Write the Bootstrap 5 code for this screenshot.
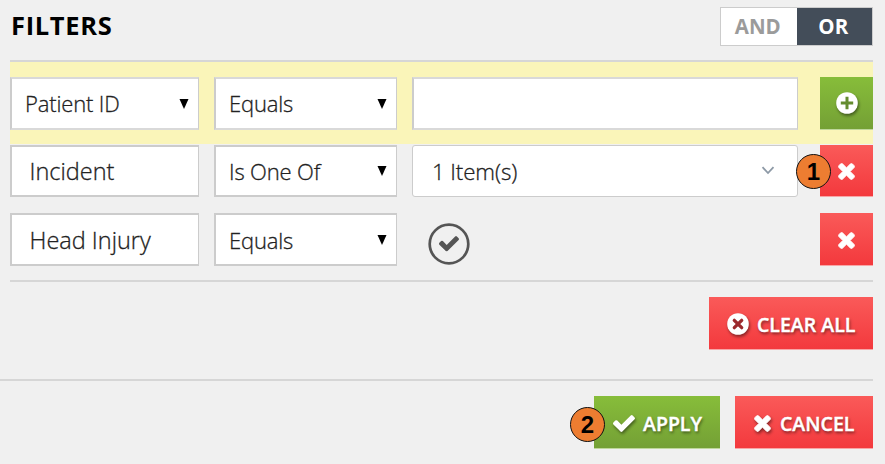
<!DOCTYPE html>
<html lang="en">
<head>
<meta charset="utf-8">
<meta name="viewport" content="width=device-width, initial-scale=1">
<title>Filters</title>
<link href="https://cdn.jsdelivr.net/npm/bootstrap@5.3.0/dist/css/bootstrap.min.css" rel="stylesheet">
<style>
body{background:#f0f0f0;color:#222;font-family:"Open Sans","Noto Sans",sans-serif;height:464px;overflow:hidden}
.panel{width:873px}
.filters{padding-left:10px}
.top{height:60px;padding-top:7px}
.title{font-size:25.5px;line-height:37px;font-weight:700;color:#000;margin:0 0 0 1px;letter-spacing:.65px}
.toggle{width:153px;height:39px;border:1.5px solid #ccc;background:#fff}
.toggle .opt{color:#9b9b9b;border:0;padding:0 2px 1px 0;font-size:20.5px;font-weight:700;background:#fff}
.toggle .opt.on{background:#434d59;color:#fff}
.rule{height:2px;background:#d6d6d6}
.filter{display:grid;grid-template-columns:189px 183px 386px 53px;column-gap:15px;height:69px;align-items:start}
.filter>:last-child{margin-left:7px}
.filter.hot{background:#faf5b9;height:82px;padding-top:15px}
.filter.mid{padding-top:1px}
.filter.mid .field,.filter.mid .act{height:52px}
.filter.last{height:67px}
.field{height:53px;background:#fff;border:2px solid #ccc;border-right-width:1.5px;font-size:22px;font-weight:300;padding:0 9px 0 13px;white-space:nowrap;-webkit-text-stroke:.3px #222}
.hot .field{border-top-color:#d9d9d9;border-bottom-color:#d9d9d9}
.field.wide{padding-left:17.5px;font-size:23.5px}
.field.multi{border-radius:3px;border-width:1.5px;border-color:#ccc;padding:0 22px 0 19px;font-size:22.3px;letter-spacing:-.1px}
.last .field span,.mid .wide span,.multi span{padding-top:2px}
.mid .act,.last .act{padding-top:2px}
.multi svg{margin-bottom:2px}
.fit{letter-spacing:-.15px}
.act{height:53px;border-radius:0;border:0;color:#fff!important;font-size:19.5px;font-weight:600;padding:0;white-space:nowrap}
.act.square{width:53px}
.red{background:linear-gradient(#fa5a59,#f3393d);border-bottom:1px solid #f8a5a6}
.green{background:linear-gradient(#87bd3a,#74a035);border-bottom:1px solid #bfd79b}
.shade{text-shadow:1px 2px 3px rgba(0,0,0,.5)}
.label{padding-top:3px;-webkit-text-stroke:.4px #fff}
.shade svg,.green svg{filter:drop-shadow(1px 2px 1.5px rgba(0,0,0,.45))}
.shade svg{position:relative;top:1px}
.step{position:absolute;width:35px;height:35px;border-radius:50%;background:#ed7d31;border:1.3px solid #111;color:#000;font:700 24px/33px "Liberation Sans",Arial,sans-serif;text-align:center;text-shadow:none}
.step.one{left:-24px;top:9px}
.step.two{left:-24px;top:11px}
.okay{padding:10px 0 0 16px}
.clearrow{height:97px;padding-top:15px}
.clear{width:164px;padding-left:18px;gap:8px}
.foot{gap:15px;padding-top:15px}
.apply{width:126px;padding-left:19px;gap:8px}
.cancel{width:138px;padding-left:19px;gap:9px}
svg{display:block;flex:none}
</style>
</head>
<body>
<svg width="0" height="0" class="position-absolute">
<symbol id="x" viewBox="270 336 1252 1248"><path fill="currentColor" stroke="currentColor" stroke-width="60" d="M1490 1322q0 40-28 68l-136 136q-28 28-68 28t-68-28l-294-294-294 294q-28 28-68 28t-68-28l-136-136q-28-28-28-68t28-68l294-294-294-294q-28-28-28-68t28-68l136-136q28-28 68-28t68 28l294 294 294-294q28-28 68-28t68 28l136 136q28 28 28 68t-28 68l-294 294 294 294q28 28 28 68z"/></symbol>
<symbol id="check" viewBox="121 334 1550 1188"><path fill="currentColor" d="M1671 566q0 40-28 68l-724 724-136 136q-28 28-68 28t-68-28l-136-136-362-362q-28-28-28-68t28-68l136-136q28-28 68-28t68 28l294 295 656-657q28-28 68-28t68 28l136 136q28 28 28 68z"/></symbol>
</svg>
<main class="panel">
<section class="filters">
<header class="top d-flex justify-content-between"><h1 class="title">FILTERS</h1>
<div class="toggle d-flex" role="group"><button class="opt w-50">AND</button><button class="opt on w-50">OR</button></div></header>
<div class="rule"></div>
<div class="filter hot">
<div class="field d-flex align-items-center justify-content-between"><span class="fit">Patient ID</span><svg width="10" height="10"><path d="M.5 0h9L5 10z"/></svg></div>
<div class="field d-flex align-items-center justify-content-between"><span class="fit">Equals</span><svg width="10" height="10"><path d="M.5 0h9L5 10z"/></svg></div>
<div class="field"></div>
<button class="btn act square green d-flex align-items-center justify-content-center" aria-label="Add"><svg width="22" height="22"><circle cx="11" cy="11" r="10.8" fill="#fff"/><path d="M11 4.800v12.400M4.800 11h12.400" stroke="#648c2f" stroke-width="3"/></svg></button>
</div>
<div class="filter mid">
<div class="field wide d-flex align-items-center"><span>Incident</span></div>
<div class="field d-flex align-items-center justify-content-between"><span class="fit">Is One Of</span><svg width="10" height="10"><path d="M.5 0h9L5 10z"/></svg></div>
<div class="field multi d-flex align-items-center justify-content-between"><span>1 Item(s)</span><svg width="14" height="9"><path d="M1.500 1.200 7 7l5.500-5.800" fill="none" stroke="#8d99a6" stroke-width="1.800"/></svg></div>
<button class="btn act square red position-relative d-flex align-items-center justify-content-center" aria-label="Remove"><svg width="17" height="17"><use href="#x"/></svg><span class="step one">1</span></button>
</div>
<div class="filter last">
<div class="field wide d-flex align-items-center"><span>Head Injury</span></div>
<div class="field d-flex align-items-center justify-content-between"><span class="fit">Equals</span><svg width="10" height="10"><path d="M.5 0h9L5 10z"/></svg></div>
<div class="okay"><svg width="42" height="42"><circle cx="21" cy="21" r="19.300" fill="none" stroke="#555" stroke-width="2.700"/><use href="#check" x="11" y="13" width="20" height="15.500" color="#555"/></svg></div>
<button class="btn act square red d-flex align-items-center justify-content-center" aria-label="Remove"><svg width="17" height="17"><use href="#x"/></svg></button>
</div>
<div class="rule"></div>
<div class="d-flex justify-content-end clearrow"><button class="btn act clear red shade d-flex align-items-center"><svg width="22" height="22"><circle cx="11" cy="11" r="10.800" fill="#fff"/><path d="m7.300 7.300 7.400 7.400m0-7.400-7.400 7.400" stroke="#9b292c" stroke-width="3.300" stroke-linecap="round"/></svg><span class="label">CLEAR ALL</span></button></div>
</section>
<div class="rule"></div>
<footer class="d-flex justify-content-end foot">
<button class="btn act apply green shade position-relative d-flex align-items-center"><span class="step two">2</span><svg width="22" height="17"><use href="#check"/></svg><span class="label">APPLY</span></button>
<button class="btn act cancel red shade d-flex align-items-center"><svg width="17" height="17"><use href="#x"/></svg><span class="label">CANCEL</span></button>
</footer>
</main>
<script src="https://cdn.jsdelivr.net/npm/bootstrap@5.3.0/dist/js/bootstrap.bundle.min.js"></script>
</body>
</html>
